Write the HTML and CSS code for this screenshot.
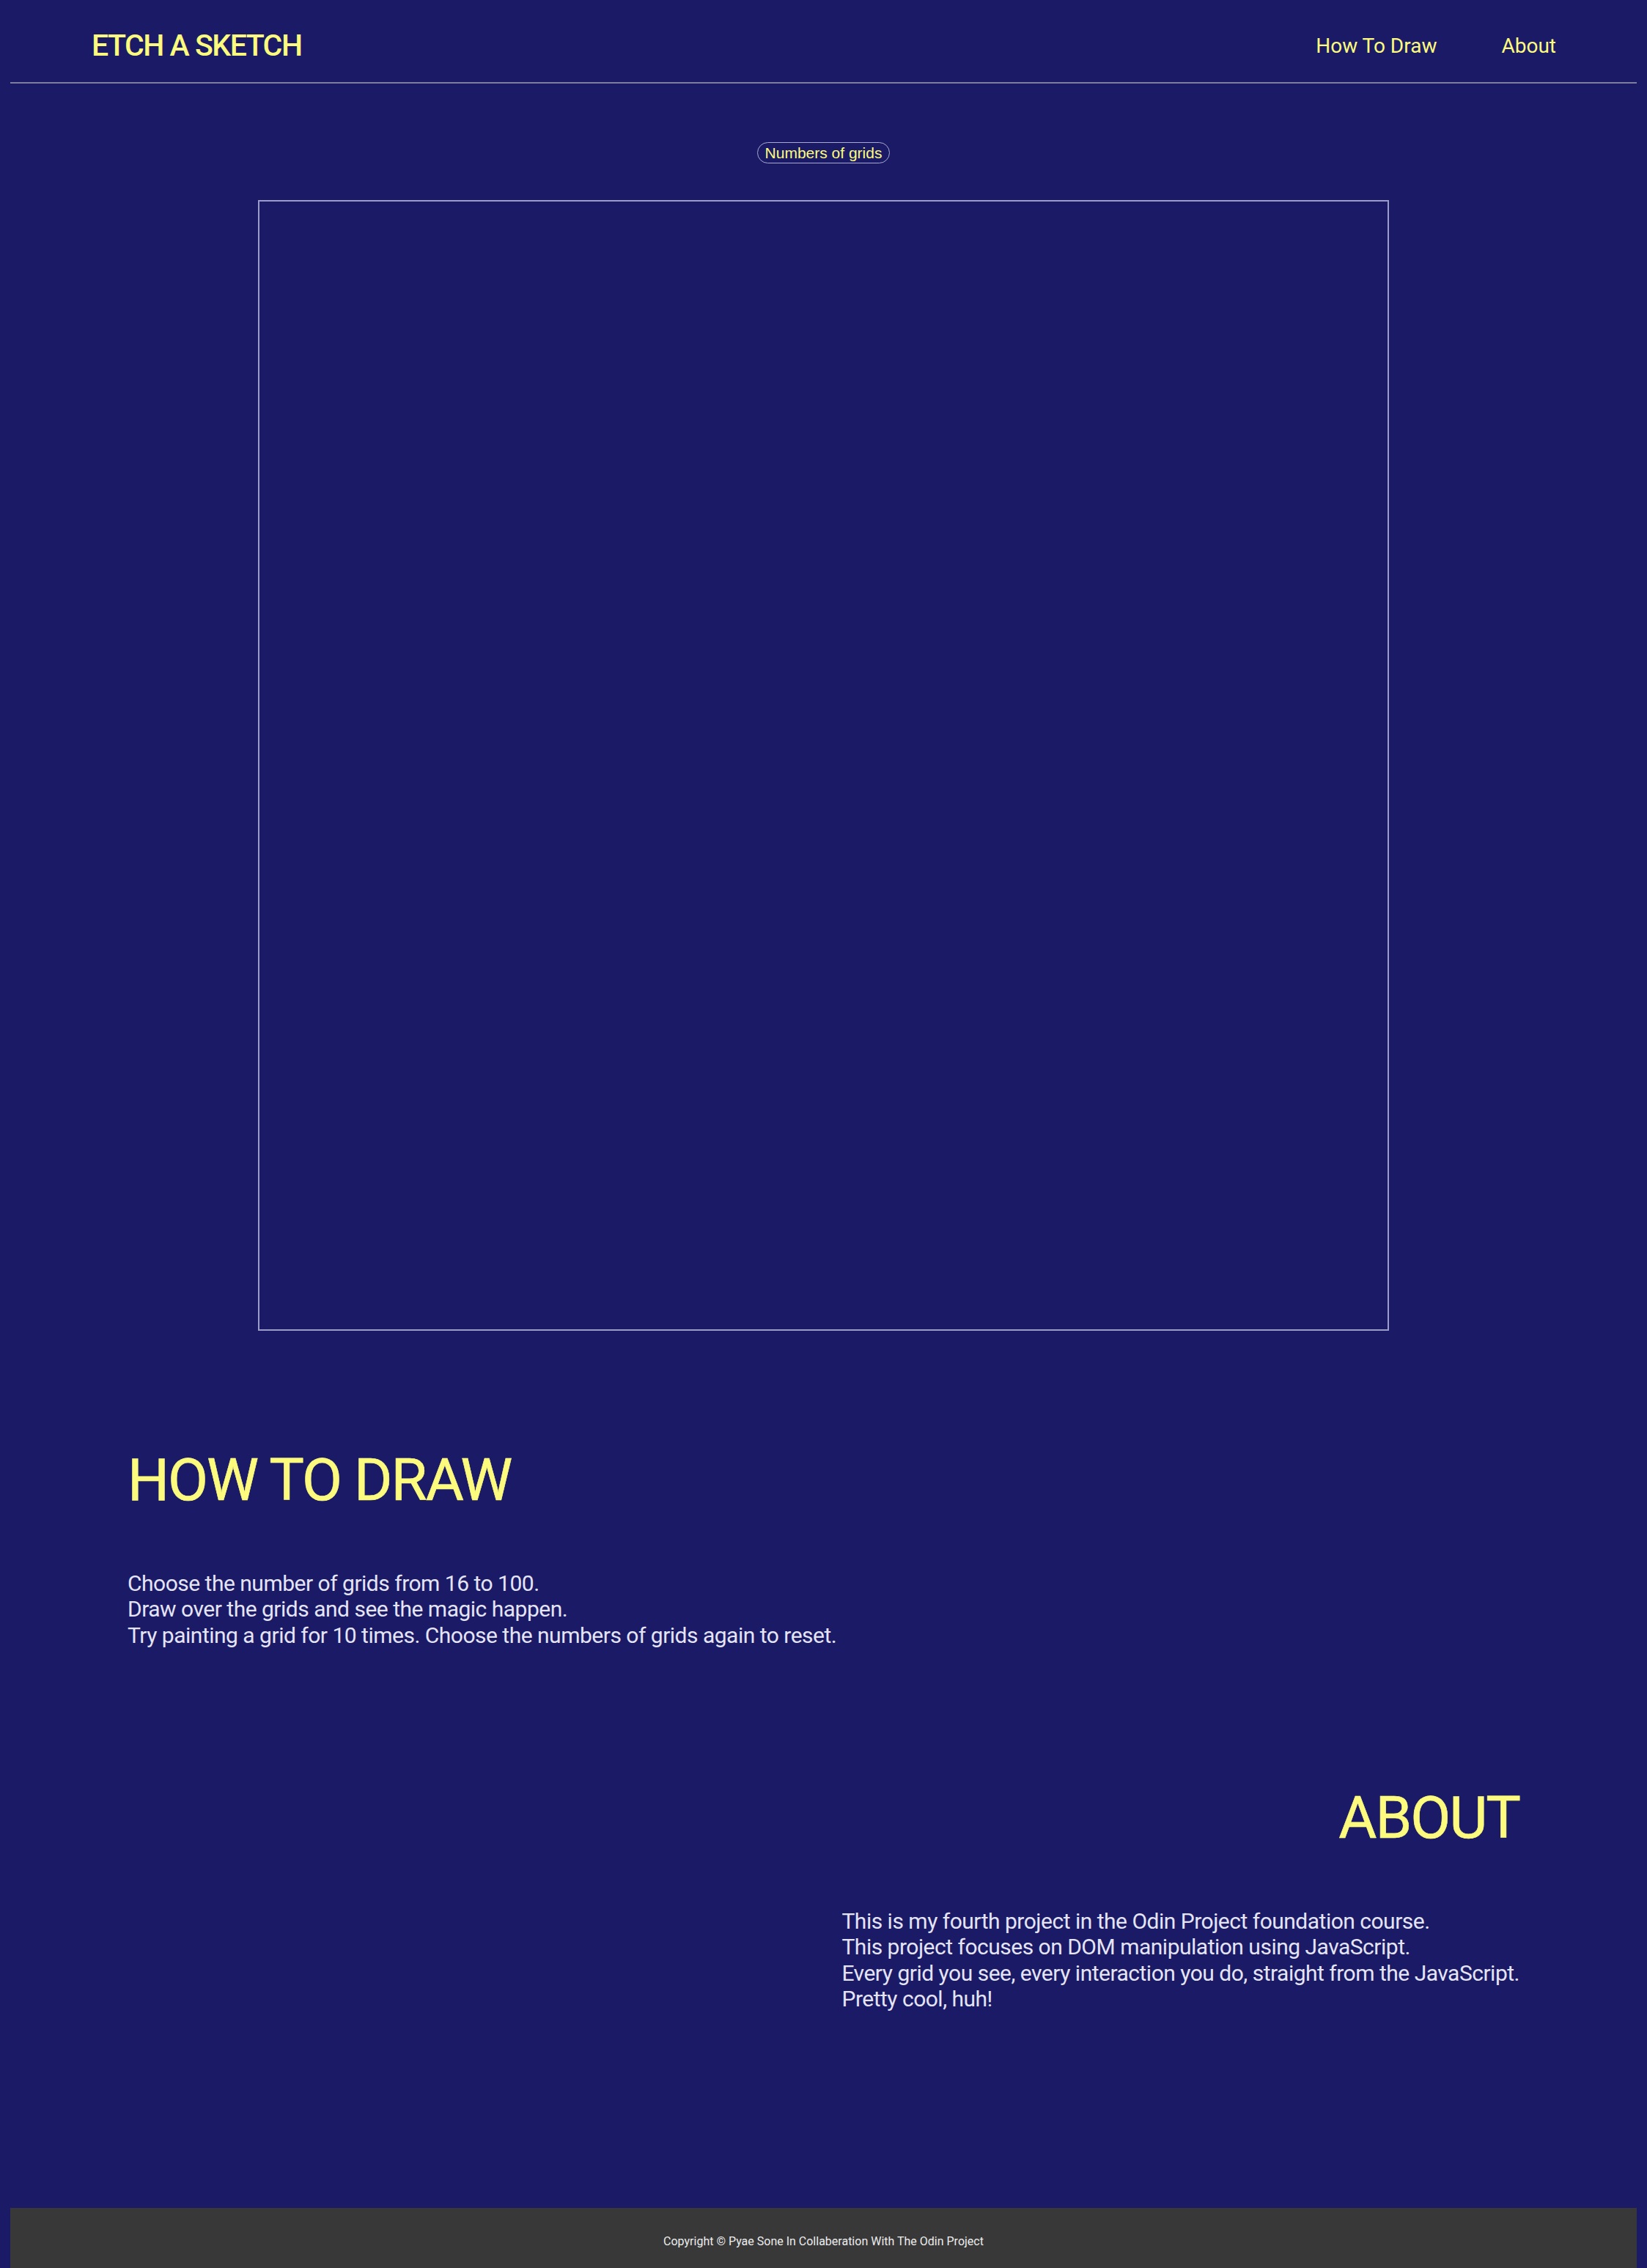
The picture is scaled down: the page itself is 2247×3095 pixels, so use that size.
FILE: index.html
```html
<!DOCTYPE html>
<html lang="en">
<head>
<meta charset="utf-8">
<title>Etch A Sketch</title>
<link rel="stylesheet" href="styles.css">
</head>
<body>
<div class="page">
  <header class="header">
    <div class="logo">ETCH A SKETCH</div>
    <nav class="nav">
      <a class="nav-link" href="#how">How To Draw</a>
      <a class="nav-link" href="#about">About</a>
    </nav>
  </header>
  <main>
    <section class="sketch">
      <button class="grid-btn" type="button">Numbers of grids</button>
      <div class="board"></div>
    </section>
    <section class="how" id="how">
      <h1 class="section-title">HOW TO DRAW</h1>
      <p class="section-text">Choose the number of grids from 16 to 100.<br>Draw over the grids and see the magic happen.<br>Try painting a grid for 10 times. Choose the numbers of grids again to reset.</p>
    </section>
    <section class="about" id="about">
      <h1 class="section-title">ABOUT</h1>
      <p class="section-text">This is my fourth project in the Odin Project foundation course.<br>This project focuses on DOM manipulation using JavaScript.<br>Every grid you see, every interaction you do, straight from the JavaScript.<br>Pretty cool, huh!</p>
    </section>
  </main>
  <footer class="footer">Copyright © Pyae Sone In Collaberation With The Odin Project</footer>
</div>
</body>
</html>
```
FILE: styles.css
```css
html, body {
  margin: 0;
  padding: 0;
  background: #1b1a66;
}
body {
  font-family: Roboto, "Liberation Sans", sans-serif;
  color: #e4e4f4;
}
.page {
  padding: 0 14px;
  min-height: 3095px;
  box-sizing: border-box;
}
.header {
  height: 114px;
  box-sizing: border-box;
  padding: 12px 110px 0 111px;
  display: flex;
  align-items: center;
  justify-content: space-between;
  border-bottom: 2px solid #7d7d9e;
}
.logo {
  color: #fdfb7d;
  font-size: 41px;
  font-weight: 500;
  letter-spacing: -1.5px;
}
.nav {
  display: flex;
  gap: 88px;
}
.nav-link {
  color: #fdfb7d;
  text-decoration: none;
  font-size: 28px;
}
.sketch {
  display: flex;
  flex-direction: column;
  align-items: center;
  padding-top: 80px;
}
.grid-btn {
  font-family: "Liberation Sans", Arial, sans-serif;
  font-size: 21px;
  color: #fdfb7d;
  background: transparent;
  border: 1.5px solid #a9a9cf;
  border-radius: 20px;
  height: 29px;
  padding: 0 10px;
  line-height: 1;
}
.board {
  margin-top: 50px;
  width: 1543px;
  height: 1543px;
  box-sizing: border-box;
  border: 2px solid #9c9cc8;
}
.section-title {
  margin: 0;
  font-size: 80px;
  font-weight: 400;
  letter-spacing: -2px;
  color: #fdfb7d;
  line-height: 1.172;
  -webkit-text-stroke: 0.6px #fdfb7d;
}
.section-text {
  margin: 0;
  font-size: 30px;
  line-height: 35.4px;
  letter-spacing: -0.5px;
}
.how {
  padding: 158px 160px 0 160px;
}
.how .section-text {
  margin-top: 75px;
}
.about {
  padding: 186px 160px 0 160px;
  display: flex;
  flex-direction: column;
  align-items: flex-end;
}
.about .section-text {
  margin-top: 75px;
}
.footer {
  margin-top: 268px;
  background: #383838;
  height: 90px;
  display: flex;
  align-items: center;
  justify-content: center;
  color: #ececec;
  font-size: 16px;
  padding-bottom: 2px;
}
```
